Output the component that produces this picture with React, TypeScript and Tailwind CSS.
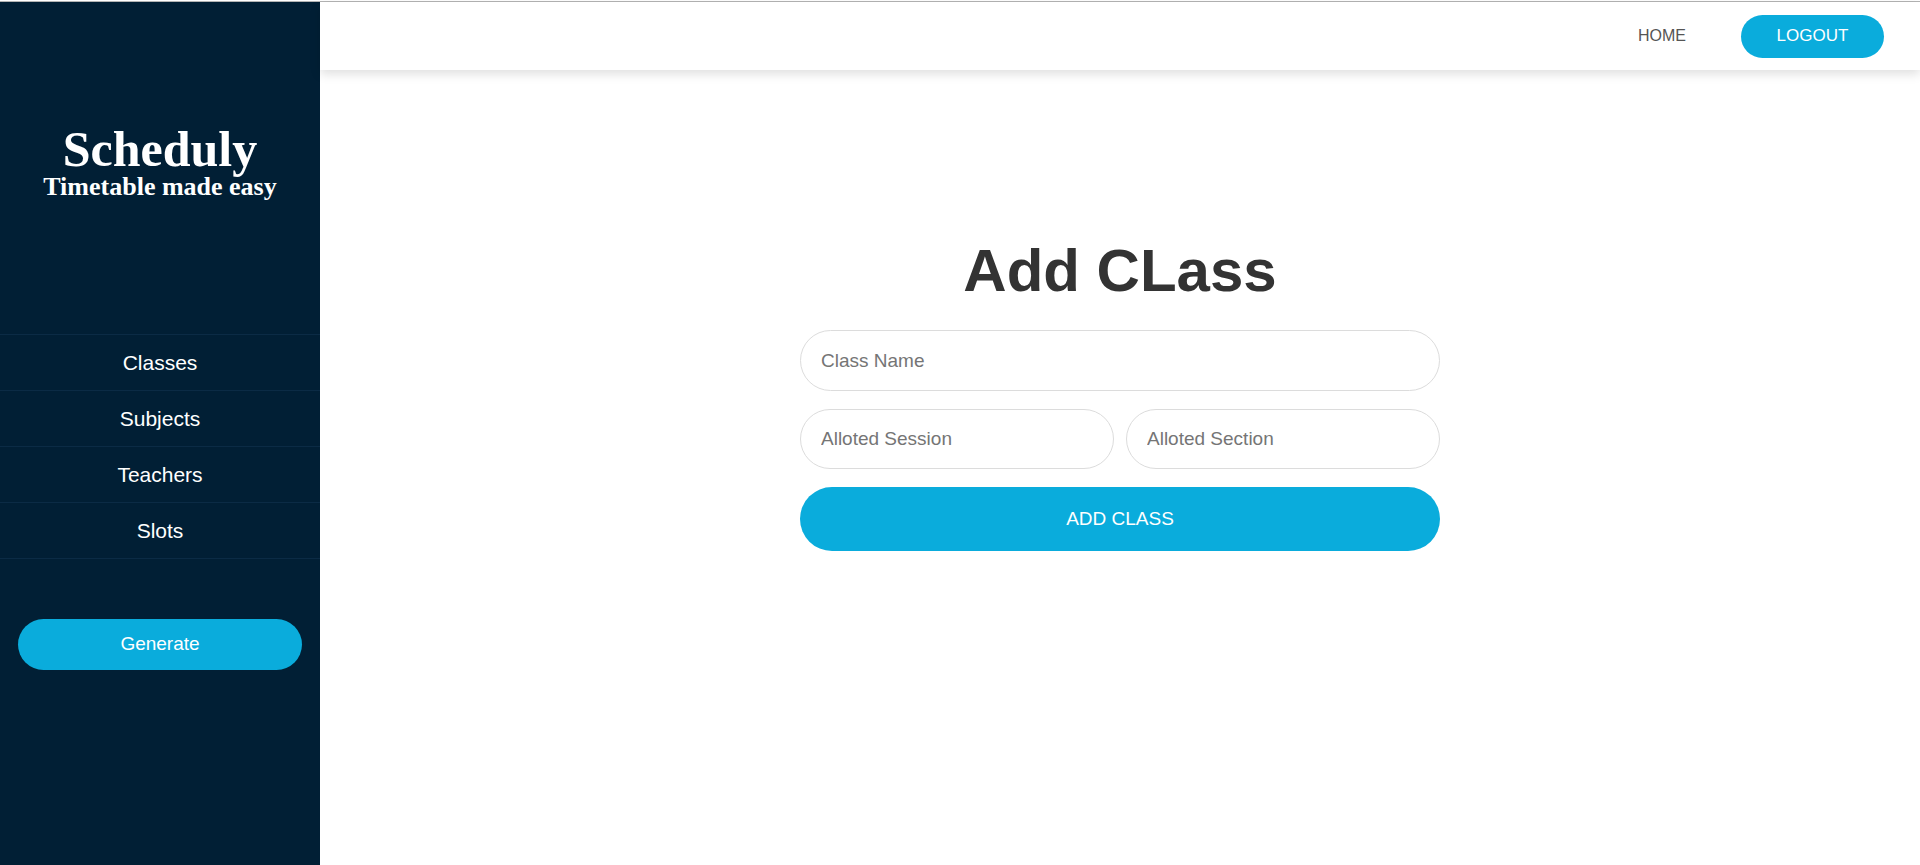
import React from "react"

const navLinks = ["Classes", "Subjects", "Teachers", "Slots"]

function Sidebar() {
  return (
    <aside className="w-[320px] shrink-0 h-full bg-[#011f35] flex flex-col">
      <div className="pt-[122px] text-center text-white font-['Liberation_Serif',serif] font-bold">
        <h1 className="text-[50px] leading-none">Scheduly</h1>
        <p className="text-[26px] leading-none">Timetable made easy</p>
      </div>

      <nav className="mt-[134px] border-t border-[#0b2b45]">
        {navLinks.map((link) => (
          <a
            key={link}
            href="#"
            className="flex h-[56px] items-center justify-center border-b border-[#0b2b45] text-[21px] text-white"
          >
            {link}
          </a>
        ))}
      </nav>

      <button className="mx-[18px] mt-[60px] h-[51px] rounded-full bg-[#0aacdc] text-[19px] text-white">
        Generate
      </button>
    </aside>
  )
}

function Navbar() {
  return (
    <header className="relative z-10 h-[68px] shrink-0 bg-white shadow-[0_4px_10px_rgba(0,0,0,0.13)] flex items-center justify-end pr-[36px]">
      <a href="#" className="text-[16px] text-[#555555]">
        HOME
      </a>
      <button className="ml-[55px] w-[143px] h-[43px] rounded-full bg-[#0aacdc] text-[17px] text-white">
        LOGOUT
      </button>
    </header>
  )
}

function AddClassForm() {
  const inputClass =
    "w-full rounded-full border border-[#dcdcdc] bg-white pl-[20px] pr-4 text-[19px] text-[#333] placeholder:text-[#757575] outline-none"

  return (
    <main className="flex-1 bg-white pt-[171px] flex flex-col items-center">
      <h2 className="text-[60px] leading-none font-bold text-[#333333]">Add CLass</h2>
      <form className="mt-[29px] w-[640px] flex flex-col gap-[18px]" onSubmit={(e) => e.preventDefault()}>
        <input className={`${inputClass} h-[61px]`} placeholder="Class Name" />
        <div className="grid grid-cols-2 gap-[12px]">
          <input className={`${inputClass} h-[60px]`} placeholder="Alloted Session" />
          <input className={`${inputClass} h-[60px]`} placeholder="Alloted Section" />
        </div>
        <button type="submit" className="h-[64px] rounded-full bg-[#0aacdc] text-[19px] text-white">
          ADD CLASS
        </button>
      </form>
    </main>
  )
}

export default function App() {
  return (
    <div className="h-[865px] w-full flex flex-col bg-white font-['Liberation_Sans',Arial,sans-serif]">
      <div className="h-px bg-white" />
      <div className="h-px bg-[#b4b4b4]" />
      <div className="flex flex-1 min-h-0">
        <Sidebar />
        <div className="flex flex-1 flex-col">
          <Navbar />
          <AddClassForm />
        </div>
      </div>
    </div>
  )
}
